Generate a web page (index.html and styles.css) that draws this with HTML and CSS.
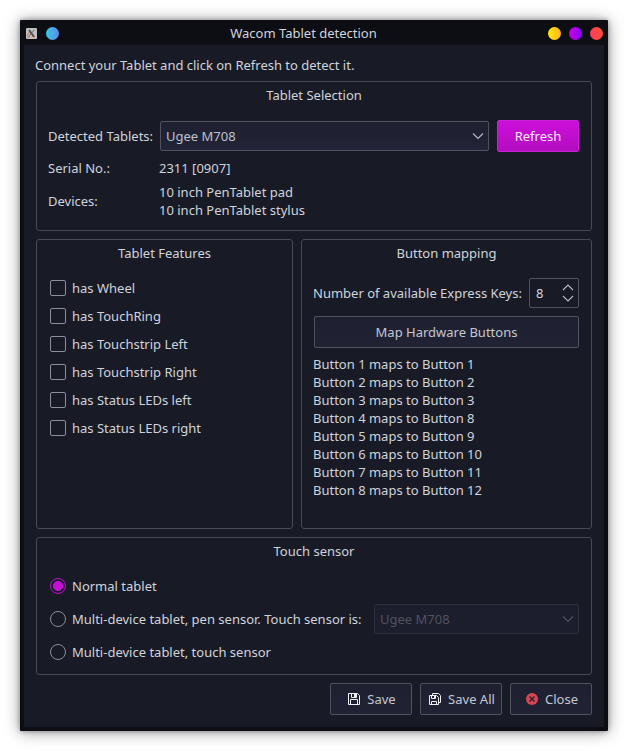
FILE: index.html
```html
<!DOCTYPE html>
<html lang="en">
<head>
<meta charset="utf-8">
<title>Wacom Tablet detection</title>
<link rel="stylesheet" href="styles.css">
</head>
<body>
<main class="window">
  <header class="titlebar">
    <svg class="app-icon" width="11" height="11" viewBox="0 0 11 11"><rect width="11" height="11" rx="1" fill="#bfbfbe"/><path d="M4 9.200H1.500V7Q2.500 4 5.500 4.500M6 8.500h3" stroke="#d98a68" stroke-width="1.300" fill="none"/><path d="M3 2L8 8.700" stroke="#444850" stroke-width="1.700"/><path d="M8.300 1.800L2.800 8.600" stroke="#555961" stroke-width=".8"/></svg>
    <span class="dot blue"></span>
    <h1>Wacom Tablet detection</h1>
    <div class="controls"><span class="dot yellow"></span><span class="dot purple"></span><span class="dot red"></span></div>
  </header>
  <div class="content">
    <p class="intro">Connect your Tablet and click on Refresh to detect it.</p>

    <section class="group selection">
      <h2>Tablet Selection</h2>
      <div class="row detected">
        <span class="label">Detected Tablets:</span>
        <div class="combo"><span>Ugee M708</span><svg class="chevron" width="12" height="8" viewBox="0 0 12 8"><path d="M1 1.500l5 5 5-5"/></svg></div>
        <button class="button primary">Refresh</button>
      </div>
      <div class="row serial"><span class="label">Serial No.:</span><span>2311 [0907]</span></div>
      <div class="row devices"><span class="label">Devices:</span><span>10 inch PenTablet pad<br>10 inch PenTablet stylus</span></div>
    </section>

    <div class="columns">
      <section class="group features">
        <h2>Tablet Features</h2>
        <div class="checks">
          <div class="option"><span class="check"></span>has Wheel</div>
          <div class="option"><span class="check"></span>has TouchRing</div>
          <div class="option"><span class="check"></span>has Touchstrip Left</div>
          <div class="option"><span class="check"></span>has Touchstrip Right</div>
          <div class="option"><span class="check"></span>has Status LEDs left</div>
          <div class="option"><span class="check"></span>has Status LEDs right</div>
        </div>
      </section>
      <section class="group mapping">
        <h2>Button mapping</h2>
        <div class="row keys">
          <span>Number of available Express Keys:</span>
          <div class="spin"><span>8</span><svg class="chevron" width="12" height="18" viewBox="0 0 12 18"><path d="M1 6l5-5 5 5M1 12l5 5 5-5"/></svg></div>
        </div>
        <button class="button map">Map Hardware Buttons</button>
        <div class="map-list">
          <div>Button 1 maps to Button 1</div>
          <div>Button 2 maps to Button 2</div>
          <div>Button 3 maps to Button 3</div>
          <div>Button 4 maps to Button 8</div>
          <div>Button 5 maps to Button 9</div>
          <div>Button 6 maps to Button 10</div>
          <div>Button 7 maps to Button 11</div>
          <div>Button 8 maps to Button 12</div>
        </div>
      </section>
    </div>

    <section class="group touch">
      <h2>Touch sensor</h2>
      <div class="radios">
        <div class="option"><span class="radio selected"></span>Normal tablet</div>
        <div class="option"><span class="radio"></span>Multi-device tablet, pen sensor. Touch sensor is:
          <div class="combo disabled"><span>Ugee M708</span><svg class="chevron" width="12" height="8" viewBox="0 0 12 8"><path d="M1 1.500l5 5 5-5"/></svg></div>
        </div>
        <div class="option"><span class="radio"></span>Multi-device tablet, touch sensor</div>
      </div>
    </section>

    <footer class="actions">
      <button class="button"><svg class="save" width="12" height="12" viewBox="0 0 12 12"><path d="M.5.500h9l2 2v9H.500zM3.500.500v4h5v-4M2.500 11.500v-5h7v5"/><path d="M6 1h2v3H6z" class="solid"/></svg>Save</button>
      <button class="button"><svg class="save" width="12" height="12" viewBox="0 0 12 12"><path d="M.5 2.500h7l2 2v7h-9zM2.500 2.500v3h4v-3M2.500 11.500v-3h5v3M3.500 2.500v-2h6l2 2v7h-2"/><path d="M5 3h1v2H5z" class="solid"/></svg>Save All</button>
      <button class="button close"><svg width="12" height="12" viewBox="0 0 12 12"><circle cx="6" cy="6" r="6" fill="#da4453"/><path d="M3.500 3.500l5 5m0-5l-5 5" stroke="#1e2030" stroke-width="1.200"/></svg>Close</button>
    </footer>
  </div>
</main>
</body>
</html>
```
FILE: styles.css
```css
* { box-sizing: border-box; }

body {
  margin: 0;
  padding: 20px;
  height: 751px;
  overflow: hidden;
  background: #fff;
  color: #d0d3dc;
  font: 13px/18px "Noto Sans", sans-serif;
}

h1, h2, p { margin: 0; font-size: inherit; font-weight: 400; }

.window {
  width: 588px;
  height: 711px;
  padding: 0 4px 4px;
  background: #0c0e13;
  border-radius: 1px;
  box-shadow: 0 1px 16px rgba(0, 0, 0, .4), 0 0 5px rgba(0, 0, 0, .35);
}

.titlebar {
  display: grid;
  grid-template-columns: 11px 13px 1fr 55px;
  align-items: center;
  height: 25px;
  padding: 2px 1px 0 2px;
}
.titlebar .blue { margin-left: 9px; }
.titlebar h1 { margin-top: -1px; padding-left: 9px; text-align: center; }
.controls { display: flex; gap: 8px; }

.dot { display: block; width: 13px; height: 13px; border-radius: 50%; }
.blue { background: linear-gradient(90deg, #31cce0, #6584ee); }
.yellow { background: linear-gradient(90deg, #ffeb00, #ffb02e); }
.purple { background: linear-gradient(90deg, #cb00df, #8b00ff); }
.red { background: linear-gradient(90deg, #ff3d5c, #ff5032); }

.content {
  height: 682px;
  padding: 11px 12px 0;
  background: #181b26;
}
.intro { height: 25px; margin-left: -1px; letter-spacing: -.01px; }

.group {
  border: 1px solid #474a55;
  border-radius: 3px;
  padding: 4px 12px 0 11px;
}
.group h2 { height: 18px; padding-left: 1px; text-align: center; }

.row { display: flex; align-items: center; }
.label { width: 111px; flex: none; }

.selection { height: 150px; }
.detected { height: 32px; margin-top: 16px; }
.detected .label { width: 112px; }
.detected .combo { width: 329px; }
.detected .button { margin-left: 8px; }
.serial { margin-top: 7px; }
.devices { margin-top: 6px; }

.combo {
  display: flex;
  align-items: center;
  justify-content: space-between;
  height: 30px;
  padding: 0 4px 0 5px;
  border: 1px solid #50535f;
  border-radius: 2px;
  background: linear-gradient(#1e2030, #222437);
  color: #bdc1cb;
}
.chevron { fill: none; stroke: #b8bbc6; stroke-width: 1.1; }

.button {
  display: flex;
  align-items: center;
  justify-content: center;
  gap: 7px;
  width: 82px;
  height: 32px;
  padding: 0;
  border: 1px solid #50535f;
  border-radius: 2px;
  background: linear-gradient(#1e2030, #212335);
  color: #c4c7d1;
  font: inherit;
}
.primary {
  border-color: #c822d4;
  background: linear-gradient(#cb0fda, #b30dc0);
  color: #fbeafc;
}

.columns { display: flex; gap: 8px; height: 290px; margin-top: 8px; }
.features { width: 257px; }
.mapping { width: 291px; }

.option { display: flex; align-items: center; height: 28px; }
.checks { margin: 12px 0 0 2px; }
.check, .radio {
  flex: none;
  width: 16px;
  height: 16px;
  margin-right: 6px;
  border: 1px solid #8c8f99;
  border-radius: 2px;
}
.radio { border-radius: 50%; }
.selected {
  border-color: #c50ed3;
  background: radial-gradient(circle, #c50ed3 4.7px, transparent 5.300px);
}

.keys { height: 30px; margin-top: 16px; justify-content: space-between; }
.spin {
  display: flex;
  align-items: center;
  justify-content: space-between;
  width: 50px;
  height: 30px;
  padding: 0 4px 0 6px;
  border: 1px solid #50535f;
  border-radius: 2px;
}
.map { width: 265px; margin: 8px 0 0 1px; }
.map-list { margin-top: 7px; }

.touch { height: 138px; margin-top: 8px; }
.radios { margin: 9px 0 0 2px; }
.radios .option { height: 33px; }
.disabled {
  width: 205px;
  margin-left: auto;
  border-color: #2c2f3c;
  background: #1c1e2d;
  color: #50535f;
}
.disabled .chevron { stroke: #50535f; }

.actions { display: flex; justify-content: flex-end; gap: 8px; margin-top: 8px; }
.actions .button { padding-left: 2px; }
.save { fill: none; stroke: #eff0f1; stroke-width: 1; }
.save .solid { fill: #eff0f1; stroke: none; }
```
